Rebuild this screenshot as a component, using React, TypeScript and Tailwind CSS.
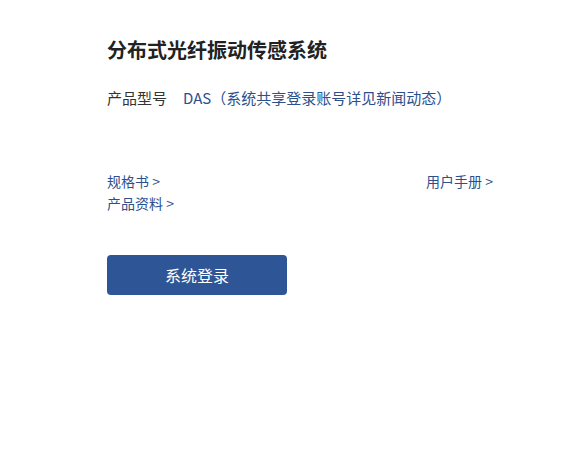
export default function App() {
  return (
    <div
      className="min-h-[450px] w-full bg-white pl-[107px] pt-[35px]"
      style={{ fontFamily: '"Noto Sans CJK SC", "Noto Sans", sans-serif' }}
    >
      <div className="w-[386px]">
        <h1 className="text-[20px] font-bold leading-[30px] text-[#222]">
          分布式光纤振动传感系统
        </h1>

        <p className="mt-[22px] text-[15px] leading-[22px] text-[#333]">
          产品型号
          <span className="ml-[16px] text-[#2d4f8c]">DAS（系统共享登录账号详见新闻动态）</span>
        </p>

        <div className="mt-[61px] flex justify-between text-[14px] leading-[22px] text-[#2d4f8c]">
          <a href="#">规格书 &gt;</a>
          <a href="#">用户手册 &gt;</a>
        </div>
        <div className="text-[14px] leading-[22px] text-[#2d4f8c]">
          <a href="#">产品资料 &gt;</a>
        </div>

        <button
          type="button"
          className="mt-[41px] h-[40px] w-[180px] rounded-[4px] bg-[#2e5596] text-[16px] text-white"
        >
          系统登录
        </button>
      </div>
    </div>
  );
}
